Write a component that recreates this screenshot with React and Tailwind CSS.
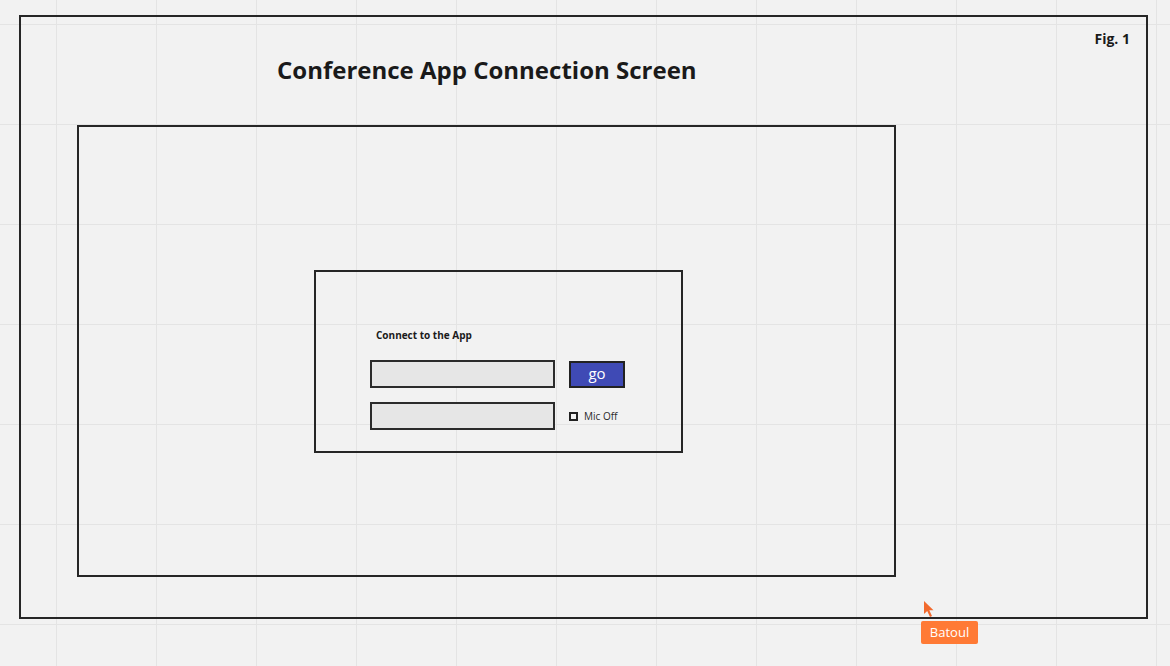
import React from 'react';

const font = { fontFamily: '"Open Sans", "Noto Sans", sans-serif' };

// little whiteboard cursor
const Cursor = () => (
    <svg width="12" height="18" viewBox="0 0 12 18" className="absolute left-[923px] top-[600px]">
        <path d="M1 1 L1 14 L4.2 11 L7 17 L9 16 L6.3 10.3 L10.5 10.3 Z" fill="#f26a2e" />
    </svg>
);

export default function App() {
    return (
        <div
            style={font}
            className="relative h-[666px] w-[1170px] overflow-hidden bg-[#f2f2f2] bg-[linear-gradient(to_right,#e4e4e4_1px,transparent_1px),linear-gradient(to_bottom,#e4e4e4_1px,transparent_1px)] bg-[size:100px_100px] bg-[position:56px_24px] pl-[19px] pt-[15px]"
        >
            {/* Outer frame */}
            <div className="flex h-[604px] w-[1129px] flex-col border-2 border-[#262626]">
                {/* Header */}
                <div className="flex h-[108px] items-start">
                    <h1 className="ml-[256px] mt-[37px] text-[24px] font-bold leading-[32px] text-[#1a1a1a]">
                        Conference App Connection Screen
                    </h1>
                    <span className="ml-auto mr-[16px] mt-[12px] text-[14px] font-bold leading-[20px] text-[#1a1a1a]">
                        Fig. 1
                    </span>
                </div>

                {/* Inner frame */}
                <div className="ml-[56px] h-[452px] w-[819px] border-2 border-[#262626] pl-[235px] pt-[143px]">
                    {/* Dialog */}
                    <div className="h-[183px] w-[369px] border-2 border-[#262626] pl-[54px] pt-[56px]">
                        <p className="ml-[6px] text-[10px] font-bold leading-[14px] text-[#1a1a1a]">
                            Connect to the App
                        </p>

                        <div className="mt-[18px] flex items-start gap-[14px]">
                            <div className="h-[28px] w-[185px] border-2 border-[#2b2b2b] bg-[#e6e6e6]" />
                            <button className="mt-[1px] flex h-[27px] w-[56px] items-center justify-center border-2 border-[#222] bg-[#3f4ab5] pb-[2px] text-[15px] leading-none text-white">
                                go
                            </button>
                        </div>

                        <div className="mt-[14px] flex items-center gap-[14px]">
                            <div className="h-[28px] w-[185px] border-2 border-[#2b2b2b] bg-[#e6e6e6]" />
                            <div className="flex items-center gap-[6px]">
                                <span className="h-[9px] w-[9px] border-2 border-[#222] bg-[#f2f2f2]" />
                                <span className="text-[10px] leading-none text-[#2a2a2a]">Mic Off</span>
                            </div>
                        </div>
                    </div>
                </div>
            </div>

            {/* Collaborator cursor */}
            <Cursor />
            <div className="absolute left-[921px] top-[621px] flex h-[23px] w-[57px] items-center justify-center rounded-[2px] bg-[#ff7a35] text-[13px] leading-none text-white">
                Batoul
            </div>
        </div>
    );
}
